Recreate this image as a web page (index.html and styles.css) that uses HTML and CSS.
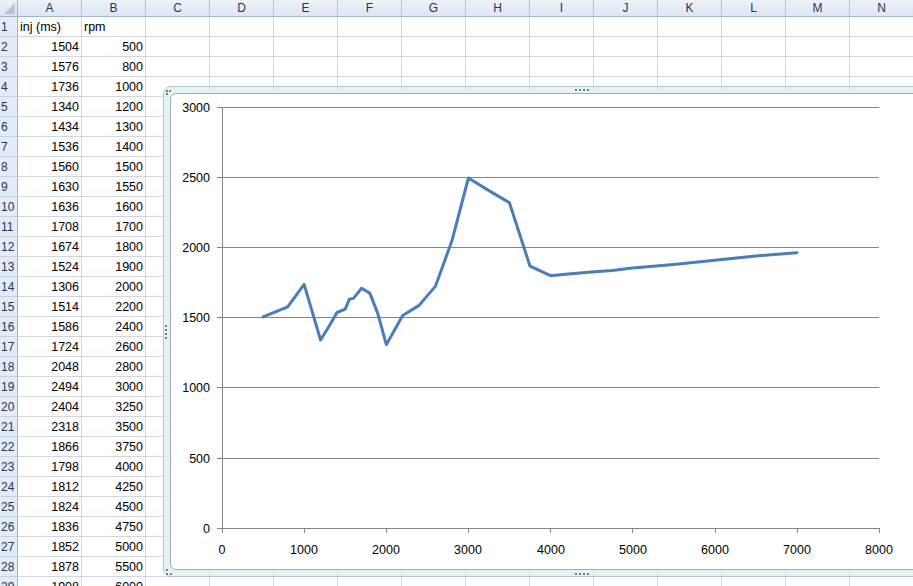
FILE: index.html
```html
<!DOCTYPE html>
<html>
<head>
<meta charset="utf-8">
<link rel="stylesheet" href="styles.css">
</head>
<body>
<div class="sheet">
  <div class="colheads">
    <div class="corner"><span class="tri"></span></div>
    <div class="ch">A</div><div class="ch">B</div><div class="ch">C</div><div class="ch">D</div><div class="ch">E</div><div class="ch">F</div><div class="ch">G</div><div class="ch">H</div><div class="ch">I</div><div class="ch">J</div><div class="ch">K</div><div class="ch">L</div><div class="ch">M</div><div class="ch">N</div>
  </div>
  <div class="row"><div class="rh">1</div><div class="c">inj (ms)</div><div class="c">rpm</div><div class="rest"></div></div>
  <div class="row"><div class="rh">2</div><div class="c n">1504</div><div class="c n">500</div><div class="rest"></div></div>
  <div class="row"><div class="rh">3</div><div class="c n">1576</div><div class="c n">800</div><div class="rest"></div></div>
  <div class="row"><div class="rh">4</div><div class="c n">1736</div><div class="c n">1000</div><div class="rest"></div></div>
  <div class="row"><div class="rh">5</div><div class="c n">1340</div><div class="c n">1200</div><div class="rest"></div></div>
  <div class="row"><div class="rh">6</div><div class="c n">1434</div><div class="c n">1300</div><div class="rest"></div></div>
  <div class="row"><div class="rh">7</div><div class="c n">1536</div><div class="c n">1400</div><div class="rest"></div></div>
  <div class="row"><div class="rh">8</div><div class="c n">1560</div><div class="c n">1500</div><div class="rest"></div></div>
  <div class="row"><div class="rh">9</div><div class="c n">1630</div><div class="c n">1550</div><div class="rest"></div></div>
  <div class="row"><div class="rh">10</div><div class="c n">1636</div><div class="c n">1600</div><div class="rest"></div></div>
  <div class="row"><div class="rh">11</div><div class="c n">1708</div><div class="c n">1700</div><div class="rest"></div></div>
  <div class="row"><div class="rh">12</div><div class="c n">1674</div><div class="c n">1800</div><div class="rest"></div></div>
  <div class="row"><div class="rh">13</div><div class="c n">1524</div><div class="c n">1900</div><div class="rest"></div></div>
  <div class="row"><div class="rh">14</div><div class="c n">1306</div><div class="c n">2000</div><div class="rest"></div></div>
  <div class="row"><div class="rh">15</div><div class="c n">1514</div><div class="c n">2200</div><div class="rest"></div></div>
  <div class="row"><div class="rh">16</div><div class="c n">1586</div><div class="c n">2400</div><div class="rest"></div></div>
  <div class="row"><div class="rh">17</div><div class="c n">1724</div><div class="c n">2600</div><div class="rest"></div></div>
  <div class="row"><div class="rh">18</div><div class="c n">2048</div><div class="c n">2800</div><div class="rest"></div></div>
  <div class="row"><div class="rh">19</div><div class="c n">2494</div><div class="c n">3000</div><div class="rest"></div></div>
  <div class="row"><div class="rh">20</div><div class="c n">2404</div><div class="c n">3250</div><div class="rest"></div></div>
  <div class="row"><div class="rh">21</div><div class="c n">2318</div><div class="c n">3500</div><div class="rest"></div></div>
  <div class="row"><div class="rh">22</div><div class="c n">1866</div><div class="c n">3750</div><div class="rest"></div></div>
  <div class="row"><div class="rh">23</div><div class="c n">1798</div><div class="c n">4000</div><div class="rest"></div></div>
  <div class="row"><div class="rh">24</div><div class="c n">1812</div><div class="c n">4250</div><div class="rest"></div></div>
  <div class="row"><div class="rh">25</div><div class="c n">1824</div><div class="c n">4500</div><div class="rest"></div></div>
  <div class="row"><div class="rh">26</div><div class="c n">1836</div><div class="c n">4750</div><div class="rest"></div></div>
  <div class="row"><div class="rh">27</div><div class="c n">1852</div><div class="c n">5000</div><div class="rest"></div></div>
  <div class="row"><div class="rh">28</div><div class="c n">1878</div><div class="c n">5500</div><div class="rest"></div></div>
  <div class="row"><div class="rh">29</div><div class="c n">1908</div><div class="c n">6000</div><div class="rest"></div></div>

  <div class="chart">
    <div class="plot">
      <svg class="plot-svg" width="784" height="475" viewBox="171 94 784 475" xmlns="http://www.w3.org/2000/svg">
        <g stroke="#868686" stroke-width="1" shape-rendering="crispEdges">
          <line x1="217" y1="107.5" x2="879" y2="107.5"/>
          <line x1="217" y1="177.5" x2="879" y2="177.5"/>
          <line x1="217" y1="247.5" x2="879" y2="247.5"/>
          <line x1="217" y1="317.5" x2="879" y2="317.5"/>
          <line x1="217" y1="387.5" x2="879" y2="387.5"/>
          <line x1="217" y1="458.5" x2="879" y2="458.5"/>
          <line x1="217" y1="528.5" x2="879" y2="528.5"/>
          <line x1="222.5" y1="107" x2="222.5" y2="533"/>
          <line x1="304.5" y1="528" x2="304.5" y2="533"/>
          <line x1="386.5" y1="528" x2="386.5" y2="533"/>
          <line x1="468.5" y1="528" x2="468.5" y2="533"/>
          <line x1="550.5" y1="528" x2="550.5" y2="533"/>
          <line x1="632.5" y1="528" x2="632.5" y2="533"/>
          <line x1="715.5" y1="528" x2="715.5" y2="533"/>
          <line x1="797.5" y1="528" x2="797.5" y2="533"/>
          <line x1="879.5" y1="528" x2="879.5" y2="533"/>
        </g>
        <g class="ylab" text-anchor="end">
          <text x="210" y="112">3000</text>
          <text x="210" y="182">2500</text>
          <text x="210" y="252">2000</text>
          <text x="210" y="322">1500</text>
          <text x="210" y="392">1000</text>
          <text x="210" y="463">500</text>
          <text x="210" y="533">0</text>
        </g>
        <g class="xlab" text-anchor="middle">
          <text x="222" y="554">0</text>
          <text x="304" y="554">1000</text>
          <text x="386" y="554">2000</text>
          <text x="468" y="554">3000</text>
          <text x="551" y="554">4000</text>
          <text x="633" y="554">5000</text>
          <text x="715" y="554">6000</text>
          <text x="797" y="554">7000</text>
          <text x="879" y="554">8000</text>
        </g>
        <polyline fill="none" stroke="#4a7ebb" stroke-width="3" stroke-linejoin="round" stroke-linecap="round"
          points="263.1,316.9 287.7,306.8 304.1,284.4 320.6,340 328.8,326.8 337,312.5 345.2,309.1 349.3,299.3 353.4,298.4 361.6,288.3 369.8,293.1 378,314.1 386.3,344.7 402.7,315.5 419.1,305.4 435.5,286.1 452,240.6 468.4,178 488.9,190.6 509.4,202.7 530,266.1 550.5,275.7 571,273.7 591.6,272 612.1,270.4 632.6,268.1 673.7,264.5 714.8,260.2 755.8,256 796.9,252.7"/>
      </svg>
    </div>
    <span class="handle h-tl"></span>
    <span class="handle h-top"></span>
    <span class="handle h-left"></span>
    <span class="handle h-bl"></span>
    <span class="handle h-bottom"></span>
  </div>
</div>
</body>
</html>
```

FILE: styles.css
```css
html, body {
  margin: 0;
  padding: 0;
  background: #ffffff;
}
body {
  width: 913px;
  height: 586px;
  overflow: hidden;
  font-family: "Liberation Sans", Arial, sans-serif;
  font-size: 12.5px;
  color: #000;
}
.sheet {
  position: relative;
  width: 913px;
}
.colheads {
  display: flex;
  height: 17px;
}
.corner {
  position: relative;
  width: 18px;
  flex: none;
  box-sizing: border-box;
  background: linear-gradient(#eef2f8, #dbe3ee);
  border-right: 1px solid #9eb6ce;
  border-bottom: 1px solid #9eb6ce;
}
.tri {
  position: absolute;
  right: 2px;
  bottom: 2px;
  width: 11px;
  height: 11px;
  background: #b6c4d6;
  clip-path: polygon(100% 0, 100% 100%, 0 100%);
}
.ch {
  width: 64px;
  flex: none;
  box-sizing: border-box;
  background: linear-gradient(#edf2f9, #dde6f2);
  border-right: 1px solid #b4c4d8;
  border-bottom: 1px solid #9eb6ce;
  text-align: center;
  font-size: 12px;
  line-height: 16px;
  color: #1e3757;
}
.row {
  display: flex;
  height: 20px;
}
.rh {
  width: 18px;
  flex: none;
  box-sizing: border-box;
  background: #e4ecf7;
  border-right: 1px solid #9eb6ce;
  border-bottom: 1px solid #c5d3e3;
  padding-left: 1px;
  font-size: 12px;
  line-height: 20px;
  color: #1e3757;
  overflow: hidden;
  white-space: nowrap;
}
.c {
  width: 64px;
  flex: none;
  box-sizing: border-box;
  border-right: 1px solid #d0d7e5;
  border-bottom: 1px solid #d0d7e5;
  padding: 0 2px;
  line-height: 20px;
  white-space: nowrap;
  overflow: hidden;
}
.n {
  text-align: right;
}
.rest {
  flex: 1;
  box-sizing: border-box;
  border-bottom: 1px solid #d0d7e5;
  background: repeating-linear-gradient(to right, transparent 0 63px, #d0d7e5 63px 64px);
}
.chart {
  position: absolute;
  left: 163px;
  top: 86px;
  width: 800px;
  height: 491px;
  box-sizing: border-box;
  border: 1px solid #b9c5ca;
  border-radius: 8px 0 0 8px;
  background: rgba(222, 241, 243, 0.82);
  padding: 6px;
}
.plot {
  box-sizing: border-box;
  height: 477px;
  background: #fff;
  border: 1px solid #a3abb0;
  border-radius: 6px 0 0 6px;
  overflow: hidden;
}
.plot-svg {
  display: block;
}
.plot-svg text {
  font-family: "Liberation Sans", Arial, sans-serif;
  font-size: 12.5px;
  fill: #000;
}
.handle {
  position: absolute;
  width: 2px;
  height: 2px;
  background: #6f7f8e;
}
.h-tl {
  left: 2px;
  top: 3px;
  box-shadow: 3px 0 #6f7f8e, 0 3px #6f7f8e;
}
.h-bl {
  left: 2px;
  top: 482px;
  box-shadow: 0 4px #6f7f8e, 4px 4px #6f7f8e;
}
.h-top {
  left: 411px;
  top: 2px;
  box-shadow: 4px 0 #6f7f8e, 8px 0 #6f7f8e, 12px 0 #6f7f8e;
}
.h-bottom {
  left: 411px;
  top: 486px;
  box-shadow: 4px 0 #6f7f8e, 8px 0 #6f7f8e, 12px 0 #6f7f8e;
}
.h-left {
  left: 1px;
  top: 238px;
  box-shadow: 0 4px #6f7f8e, 0 8px #6f7f8e, 0 12px #6f7f8e;
}
```
